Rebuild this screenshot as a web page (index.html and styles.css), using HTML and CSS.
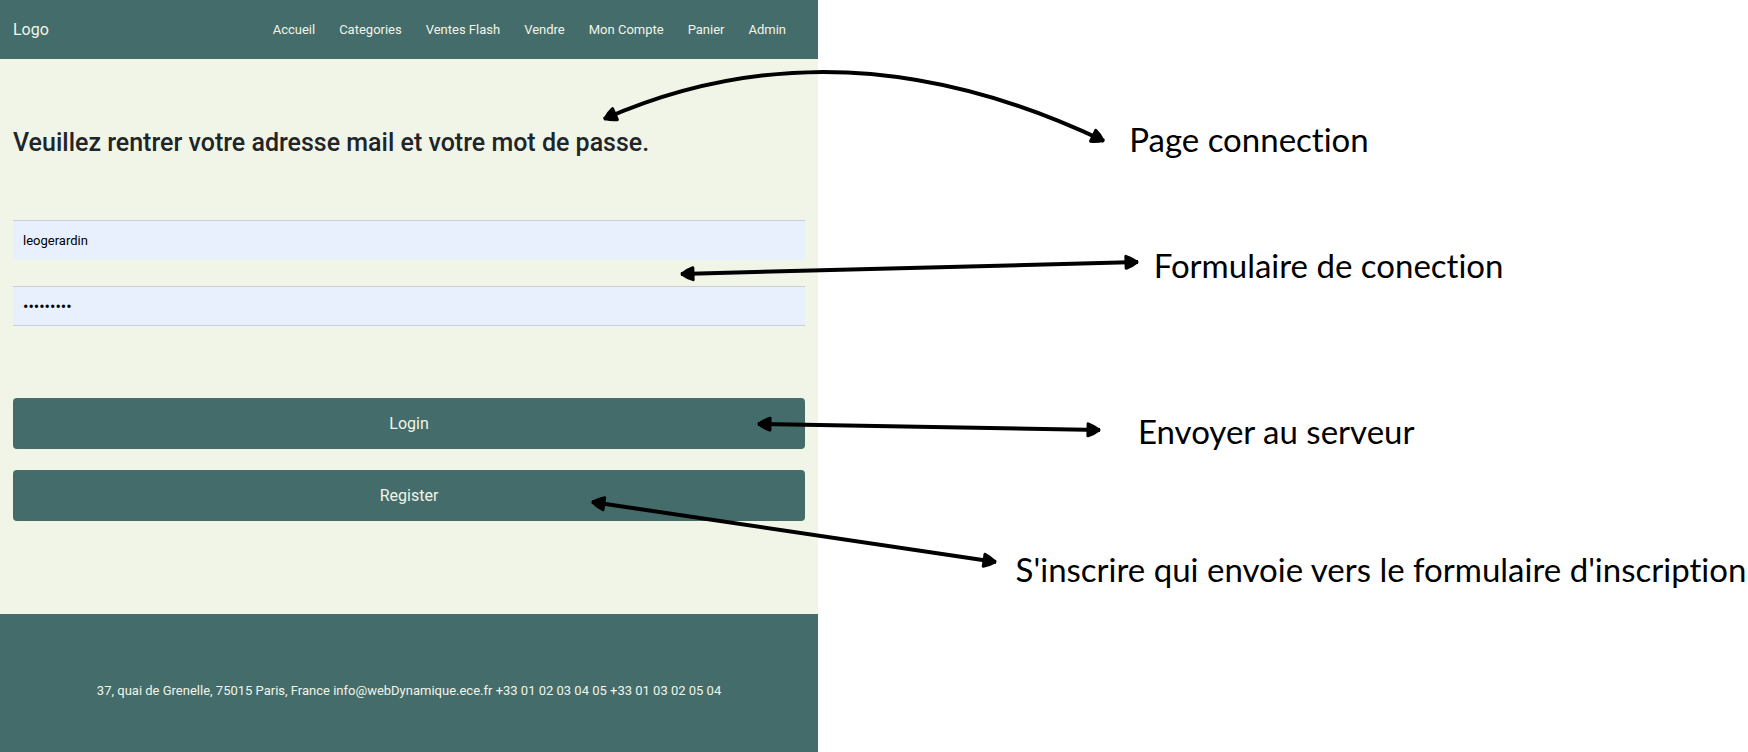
FILE: index.html
```html
<!DOCTYPE html>
<html lang="fr">
<head>
<meta charset="utf-8">
<meta name="viewport" content="width=device-width, initial-scale=1">
<title>Page connection</title>
<link rel="stylesheet" href="styles.css">
</head>
<body>
<div class="board">
  <div class="site">
    <header class="navbar">
      <a class="brand" href="#">Logo</a>
      <nav class="menu">
        <a href="#">Accueil</a>
        <a href="#">Categories</a>
        <a href="#">Ventes Flash</a>
        <a href="#">Vendre</a>
        <a href="#">Mon Compte</a>
        <a href="#">Panier</a>
        <a href="#">Admin</a>
      </nav>
    </header>
    <main class="content">
      <h1 class="title">Veuillez rentrer votre adresse mail et votre mot de passe.</h1>
      <form class="form">
        <input class="field field-user" type="text" value="leogerardin" aria-label="Adresse mail">
        <input class="field field-pass" type="password" value="motdepass" aria-label="Mot de passe">
        <div class="actions">
          <button class="btn" type="button">Login</button>
          <button class="btn" type="button">Register</button>
        </div>
      </form>
    </main>
    <footer class="footer">
      <p class="address">37, quai de Grenelle, 75015 Paris, France info@webDynamique.ece.fr +33 01 02 03 04 05 +33 01 03 02 05 04</p>
    </footer>
  </div>
  <svg class="arrows" viewBox="0 0 1748 752" preserveAspectRatio="none" aria-hidden="true">
    <defs>
      <marker id="head" markerUnits="userSpaceOnUse" markerWidth="20" markerHeight="20" refX="17" refY="10" orient="auto-start-reverse">
        <path class="head" d="M5 4 Q11 6 16 10 Q11 14 5 16 Z"/>
      </marker>
    </defs>
    <path class="line" d="M604 119 Q840 15 1104 141"/>
    <path class="line" d="M681 274 L1138 262"/>
    <path class="line" d="M758 424 L1100 430"/>
    <path class="line" d="M592 502 L996 562"/>
  </svg>
  <p class="note note-page">Page connection</p>
  <p class="note note-form">Formulaire de conection</p>
  <p class="note note-send">Envoyer au serveur</p>
  <p class="note note-signup">S'inscrire qui envoie vers le formulaire d'inscription</p>
</div>
</body>
</html>
```

FILE: styles.css
```css
* {
  box-sizing: border-box;
}

body {
  margin: 0;
  background: #fff;
  font-family: Roboto, sans-serif;
  font-size: 13px;
  line-height: 24px;
}

.board {
  position: relative;
  display: flex;
  min-height: 100vh;
  overflow: hidden;
}

.site {
  display: flex;
  flex-direction: column;
  width: 46.8%;
  background: #f1f5e7;
}

.navbar {
  display: flex;
  align-items: center;
  justify-content: space-between;
  padding: 18px 32px 17px 13px;
  background: #446c6b;
}

.brand {
  color: #f1f5e7;
  font-size: 16px;
  text-decoration: none;
}

.menu {
  display: flex;
  gap: 24px;
}

.menu a {
  color: #f1f5e7;
  text-decoration: none;
}

.content {
  flex: 1;
  padding: 65px 13px 0;
}

.title {
  margin: 0 0 58px;
  color: #212529;
  font-size: 25px;
  font-weight: 500;
  line-height: 38px;
}

.form {
  display: flex;
  flex-direction: column;
  gap: 26px;
}

.field {
  width: 100%;
  height: 40px;
  padding: 0 10px;
  border: 0;
  border-top: 1px solid #c5cfdc;
  background: #e8f0fe;
  color: #000;
  font: inherit;
}

.field-pass {
  border-bottom: 1px solid #c5cfdc;
  font-size: 16px;
}

.actions {
  display: flex;
  flex-direction: column;
  gap: 21px;
  padding-top: 46px;
}

.btn {
  height: 51px;
  border: 0;
  border-radius: 4px;
  background: #446c6b;
  color: #f1f5e7;
  font: inherit;
  font-size: 16px;
}

.footer {
  padding: 65px 13px 49px;
  background: #446c6b;
  color: #f1f5e7;
  text-align: center;
}

.address {
  margin: 0;
}

.arrows {
  position: absolute;
  inset: 0;
  width: 100%;
  height: 100%;
}

.line {
  fill: none;
  stroke: #000;
  stroke-width: 4;
  marker-start: url(#head);
  marker-end: url(#head);
}

.head {
  fill: #000;
  stroke: #000;
  stroke-width: 3;
  stroke-linejoin: round;
}

.note {
  position: absolute;
  margin: 0;
  color: #000;
  font-family: Lato, sans-serif;
  font-size: 33px;
  font-variant-ligatures: none;
  line-height: 40px;
  white-space: nowrap;
}

.note-page {
  top: 119px;
  left: 64.6%;
}

.note-form {
  top: 245px;
  left: 66%;
}

.note-send {
  top: 411px;
  left: 65.1%;
}

.note-signup {
  top: 549px;
  left: 58.1%;
}
```
